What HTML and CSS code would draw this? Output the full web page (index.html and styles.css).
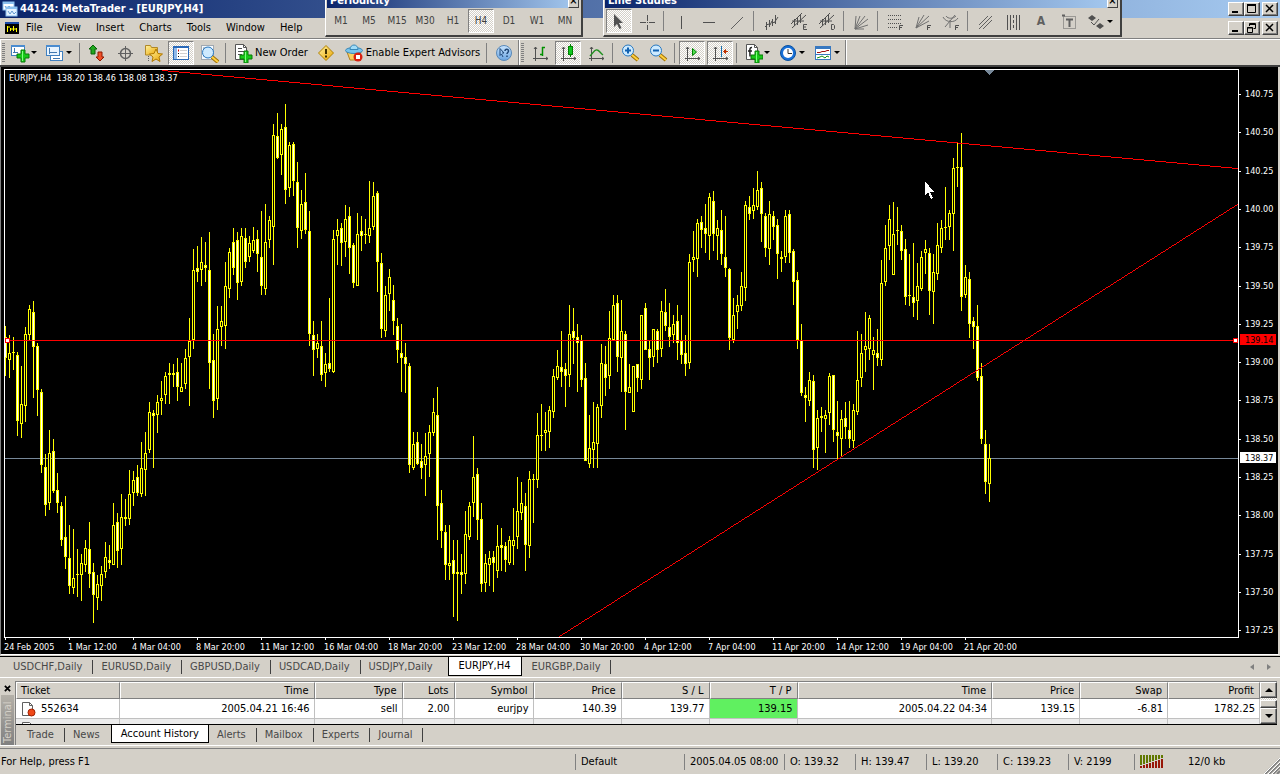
FILE: index.html
```html
<!DOCTYPE html>
<html lang="en">
<head>
<meta charset="utf-8">
<title>44124: MetaTrader - [EURJPY,H4]</title>
<link rel="stylesheet" href="styles.css">
</head>
<body>
<svg class="defs" width="0" height="0" aria-hidden="true">
  <defs>
    <linearGradient id="blue" x1="0" y1="0" x2="0" y2="1"><stop offset="0" stop-color="#c8e4ff"/><stop offset="1" stop-color="#6aa4e0"/></linearGradient>
    <linearGradient id="gold" x1="0" y1="0" x2="1" y2="1"><stop offset="0" stop-color="#fff2a0"/><stop offset="1" stop-color="#eaa400"/></linearGradient>
    <g id="plus"><path d="M11 8h4v4h4v4h-4v4h-4v-4H7v-4h4z" fill="#18c818" stroke="#087808"/><path d="M12.500 9v10" stroke="#80ff80"/></g>
    <g id="axes" fill="none" stroke="#505050"><path d="M5.500 4v14M3 15.500h15M4 6l1.500-2L7 6M16 14l2 1.500-2 1.500"/></g>
    <g id="lens"><path d="M12 12l6 5" stroke="#a07000" stroke-width="4"/><path d="M12 12l6 5" stroke="#ffd040" stroke-width="2"/><circle cx="8" cy="7.500" r="5.500" fill="#cdeaff" stroke="#2878c0"/></g>
    <g id="doc"><path d="M3.500 1.500h8l3 3v12h-11z" fill="#fff" stroke="#555"/><path d="M11.500 1.500v3h3" fill="none" stroke="#555"/></g>
  </defs>
</svg>

<header class="titlebar">
  <svg class="app-icon" viewBox="0 0 16 16"><rect x="1" y="1" width="11" height="8" fill="#fff" stroke="#8cc0f0"/><path d="M1 2h11" stroke="#8cc0f0" stroke-width="2"/><path d="M3 5l2 3 2-3 2 2" fill="none" stroke="#6098d0"/><rect x="4" y="6" width="11" height="9" fill="#e4f2ff" stroke="#8cc0f0"/><path d="M4 7h11" stroke="#8cc0f0" stroke-width="2"/><path d="M6 10l2 3 2-3 2 3 2-2" fill="none" stroke="#6098d0"/></svg>
  <h1 class="title">44124: MetaTrader - [EURJPY,H4]</h1>
  <div class="winbtns">
    <button class="winbtn" aria-label="Minimize"><svg viewBox="0 0 12 10"><path d="M2 8h6" stroke="#000" stroke-width="2"/></svg></button>
    <button class="winbtn" aria-label="Maximize"><svg viewBox="0 0 12 10"><path d="M1.500 1v7.500h8V1" fill="none" stroke="#000"/><path d="M1 1h9" stroke="#000" stroke-width="2"/></svg></button>
    <button class="winbtn last" aria-label="Close"><svg viewBox="0 0 12 10"><path d="M2 1l7 7M9 1L2 8" stroke="#000" stroke-width="1.500"/></svg></button>
  </div>
</header>

<nav class="menubar">
  <svg class="menu-icon" viewBox="0 0 14 12"><rect width="14" height="12" fill="#000"/><path d="M0 1h14" stroke="#1848a8" stroke-width="2"/><path d="M2.500 4v6M5.500 6v3M8.500 4v5M11.500 6v4M2 5h3M5 7h4M9 7h3" stroke="#ff0" fill="none"/></svg>
  <button class="menu">File</button><button class="menu">View</button><button class="menu">Insert</button><button class="menu">Charts</button><button class="menu">Tools</button><button class="menu">Window</button><button class="menu">Help</button>
  <div class="winbtns">
    <button class="winbtn" aria-label="Minimize chart"><svg viewBox="0 0 12 10"><path d="M2 8h6" stroke="#000" stroke-width="2"/></svg></button>
    <button class="winbtn" aria-label="Restore chart"><svg viewBox="0 0 12 10"><path d="M3.500 3V.5h6v5h-2M3 1.500h7M1.500 4.500h5v5h-5zM1 5h6" fill="none" stroke="#000"/></svg></button>
    <button class="winbtn last" aria-label="Close chart"><svg viewBox="0 0 12 10"><path d="M2 1l7 7M9 1L2 8" stroke="#000" stroke-width="1.500"/></svg></button>
  </div>
</nav>

<div class="toolbars">
  <div class="toolbar">
    <span class="grip"></span>
    <button class="tool drop" aria-label="New chart"><svg viewBox="0 0 20 20"><rect x="1.500" y="2.500" width="13" height="10" fill="#fff" stroke="#4080c0"/><path d="M1 3h14" stroke="#4a8cd0" stroke-width="2"/><path d="M4.500 5v5M3 9.500h5" stroke="#4078b0"/><use href="#plus" y="-1"/></svg></button>
    <button class="tool drop" aria-label="Profiles"><svg viewBox="0 0 20 20"><rect x="5.500" y="8.500" width="12" height="9" fill="#fff" stroke="#4080c0"/><path d="M8 15.500h7" stroke="#4078b0"/><rect x="1.500" y="2.500" width="13" height="10" fill="#e8f4ff" stroke="#4080c0"/><path d="M1 3h14" stroke="#4a8cd0" stroke-width="2"/><path d="M4.500 5v6M4 9.500h8" stroke="#4078b0"/></svg></button>
    <span class="sep"></span>
    <button class="tool" aria-label="Market watch"><svg viewBox="0 0 20 20"><path d="M6 2l4 4H8v5H4V6H2z" fill="#20a820" stroke="#086008"/><path d="M13 18l-4-4h2V9h4v5h2z" fill="#f05028" stroke="#901800"/></svg></button>
    <button class="tool" aria-label="Data window"><svg viewBox="0 0 20 20"><circle cx="10.500" cy="10.500" r="5" fill="none" stroke="#606060" stroke-width="1.500"/><path d="M10.500 3v15M3 10.500h15" stroke="#606060"/></svg></button>
    <button class="tool" aria-label="Navigator"><svg viewBox="0 0 20 20"><path d="M2.500 12V2.500h5l1 2h6V12z" fill="url(#gold)" stroke="#b08828"/><path d="M5.500 13v5" stroke="#606060" stroke-dasharray="1 1"/><path d="M13 6l2 4.500 4.500.500-3.500 3 1 4.500-4-2.500-4 2.500 1-4.500-3.500-3 4.500-.500z" fill="url(#gold)" stroke="#b07800"/></svg></button>
    <button class="tool on" aria-label="Terminal"><svg viewBox="0 0 20 20"><rect x="2.500" y="3.500" width="15" height="13" fill="#fff" stroke="#2868b8"/><path d="M2 4h16" stroke="#2868b8" stroke-width="2"/><rect x="3" y="5" width="3" height="11" fill="#90b8e8"/><path d="M9 7.500h7M9 10.500h7M9 13.500h7" stroke="#d0d0d0"/><path d="M7 7.500h1" stroke="#c00" stroke-width="2"/><path d="M7 10.500h1M7 13.500h1" stroke="#000"/></svg></button>
    <button class="tool" aria-label="Strategy tester"><svg viewBox="0 0 20 20"><rect x="2.500" y="2.500" width="12" height="14" fill="#f4faff" stroke="#a0a8b0"/><path d="M5 5v9M4 5h8M7 8h6" stroke="#8090a0"/><use href="#lens" x="1" y="2"/></svg></button>
    <span class="sep"></span>
    <button class="tool text"><svg viewBox="0 0 20 20"><use href="#doc" x="-1" y="0"/><path d="M5 5.500h4M5 8.500h6M5 11.500h4" stroke="#505050"/><use href="#plus"/></svg>New Order</button>
    <button class="tool" aria-label="MetaEditor"><svg viewBox="0 0 20 20"><path d="M10 2.500l7.500 7.500-7.500 7.500L2.500 10z" fill="url(#gold)" stroke="#b08000"/><path d="M10 6v5M10 12.500v2" stroke="#403000" stroke-width="2"/></svg></button>
    <button class="tool text"><svg viewBox="0 0 20 20"><path d="M3 9l3 8h8l3-8z" fill="#f8d060" stroke="#b08020"/><ellipse cx="10" cy="7.500" rx="8.500" ry="3" fill="#78c4ec" stroke="#3888b8"/><path d="M6 6.500c0-6 8-6 8 0z" fill="#a0dcf8" stroke="#3888b8"/><circle cx="14" cy="14" r="4.500" fill="#d82010"/><rect x="12" y="12" width="4" height="4" fill="#fff"/></svg>Enable Expert Advisors</button>
    <span class="sep"></span>
    <button class="tool" aria-label="Help"><svg viewBox="0 0 20 20"><circle cx="10" cy="10" r="7.500" fill="url(#blue)" stroke="#5888b8"/><path d="M6 5.500v7l1.500-1.500 1.500 3M6 5.500l4 4.500H8" fill="none" stroke="#204878"/><path d="M11 8c0-2.500 3.500-2.500 3.500 0 0 1.500-1.500 1.500-1.500 3M13 12.500v1.500" fill="none" stroke="#204878" stroke-width="1.500"/></svg></button>
  </div>
  <div class="toolbar">
    <span class="grip"></span>
    <button class="tool" aria-label="Bar chart"><svg viewBox="0 0 20 20"><use href="#axes"/><path d="M12.500 4v9M12 4.500h3M10 11.500h3" stroke="#009000" stroke-width="1.500"/></svg></button>
    <button class="tool on" aria-label="Candlesticks"><svg viewBox="0 0 20 20"><use href="#axes"/><path d="M12.500 1v13" stroke="#008000"/><rect x="10.500" y="3.500" width="4" height="8" fill="#10c820" stroke="#008000"/></svg></button>
    <button class="tool" aria-label="Line chart"><svg viewBox="0 0 20 20"><use href="#axes"/><path d="M4 13c3-3 5-7 7-6 2 0 3 3 6 5" fill="none" stroke="#209020" stroke-width="1.500"/></svg></button>
    <span class="sep"></span>
    <button class="tool" aria-label="Zoom in"><svg viewBox="0 0 20 20"><use href="#lens"/><path d="M8 4.500v6M5 7.500h6" stroke="#1060b0" stroke-width="2"/></svg></button>
    <button class="tool" aria-label="Zoom out"><svg viewBox="0 0 20 20"><use href="#lens"/><path d="M5 7.500h6" stroke="#1060b0" stroke-width="2"/></svg></button>
    <span class="sep"></span>
    <button class="tool on" aria-label="Auto scroll"><svg viewBox="0 0 20 20"><use href="#axes"/><path d="M10.500 5.500v7l4-3.500z" fill="#50e050" stroke="#008000"/></svg></button>
    <button class="tool on" aria-label="Chart shift"><svg viewBox="0 0 20 20"><use href="#axes"/><path d="M11.500 3v11" stroke="#1870b0"/><path d="M18 8.500h-3M15.500 6.500v4l-2-2z" stroke="#c03000" fill="#c03000"/></svg></button>
    <span class="sep"></span>
    <button class="tool drop" aria-label="Indicators"><svg viewBox="0 0 20 20"><use href="#doc"/><path d="M9 4.500c-3-.500-2 3-2 9M5 8h4" fill="none" stroke="#222" stroke-width="1.500"/><use href="#plus" x="1"/></svg></button>
    <button class="tool drop" aria-label="Periods"><svg viewBox="0 0 20 20"><circle cx="10" cy="10" r="7.500" fill="#1870d8" stroke="#0850a0"/><circle cx="10" cy="10" r="5" fill="#fff"/><path d="M10 6v4.500h4" fill="none" stroke="#333"/></svg></button>
    <button class="tool drop" aria-label="Templates"><svg viewBox="0 0 20 20"><rect x="2.500" y="3.500" width="15" height="13" fill="#fff" stroke="#3878c0"/><path d="M2 4.500h16" stroke="#3878c0" stroke-width="3"/><path d="M3 11.500h14" stroke="#3878c0"/><path d="M4 9.500h3l2-1h3l2-1h2" fill="none" stroke="#a01010"/><path d="M4 15l3-1 2-1 3 2 2-2 2 1" fill="none" stroke="#109010"/></svg></button>
  </div>
  <div class="toolbar rest"></div>
</div>

<section class="float periodicity" aria-label="Periodicity">
  <div class="float-title"><span>Periodicity</span><button class="float-close" aria-label="Close Periodicity">×</button></div>
  <div class="float-body">
    <button class="tool tf">M1</button><button class="tool tf">M5</button><button class="tool tf">M15</button><button class="tool tf">M30</button><button class="tool tf">H1</button><button class="tool tf on">H4</button><button class="tool tf">D1</button><button class="tool tf">W1</button><button class="tool tf">MN</button>
  </div>
</section>

<section class="float studies" aria-label="Line Studies">
  <div class="float-title"><span>Line Studies</span><button class="float-close" aria-label="Close Line Studies">×</button></div>
  <div class="float-body">
    <button class="tool on" aria-label="Cursor"><svg viewBox="0 0 20 20"><path d="M5 3v13l3-3 2.500 5 2-1-2.500-5h4z" fill="#505050"/></svg></button>
    <button class="tool" aria-label="Crosshair"><svg viewBox="0 0 20 20" stroke="#505050"><path d="M10.500 4v6M10.500 14v5M3 11.500h6M12 11.500h6M10 11.500h1"/></svg></button>
    <span class="sep"></span>
    <button class="tool" aria-label="Vertical line"><svg viewBox="0 0 20 20" stroke="#505050"><path d="M10.500 5v13"/></svg></button>
    <button class="tool" aria-label="Horizontal line"><svg viewBox="0 0 20 20" stroke="#505050"><path d="M4 11.500h12"/></svg></button>
    <button class="tool" aria-label="Trendline"><svg viewBox="0 0 20 20" stroke="#606060"><path d="M4 18L16 6"/></svg></button>
    <span class="sep"></span>
    <button class="tool" aria-label="Linear regression"><svg viewBox="0 0 20 20" stroke="#505050" fill="none"><path d="M5.500 11v8M8.500 9v7M11.500 8v7M14.500 4v9M4 16l3-3 2 1 2-4 2 2 4-6"/></svg></button>
    <button class="tool" aria-label="Equidistant channel"><svg viewBox="0 0 20 20" stroke="#505050" fill="none"><path d="M2 13L13 2M3 17L17 4M5.500 8v7M8.500 6v8M11.500 3v9M3 10h12"/><path d="M18 13.500h-3.500v5H18M14 16h3"/></svg></button>
    <button class="tool" aria-label="Standard deviation channel"><svg viewBox="0 0 20 20" stroke="#505050" fill="none"><path d="M2 13L13 2M3 17L17 4M5.500 8v7M8.500 6v8M11.500 3v9M3 10h12"/><path d="M14.500 13.500h2l1 1v3l-1 1h-2z"/></svg></button>
    <span class="sep"></span>
    <button class="tool" aria-label="Gann fan"><svg viewBox="0 0 20 20" stroke="#707070"><path d="M4 18L5 5M4 18L9 5M4 18L14 5M4 18L17 8M4 18l13-4M4 18h9"/></svg></button>
    <span class="sep"></span>
    <button class="tool" aria-label="Fibonacci retracement"><svg viewBox="0 0 20 20" stroke="#505050" fill="none"><path d="M3 4.500h14M3 8.500h14M3 12.500h14M3 16.500h9" stroke-dasharray="1 1"/><path d="M14.500 19v-4.500H18M14 16.500h3"/></svg></button>
    <button class="tool" aria-label="Fibonacci fan"><svg viewBox="0 0 20 20" stroke="#707070" fill="none"><path d="M3 17L6 6M3 17L11 4M3 17L16 5M3 17l13-7"/><path stroke="#505050" d="M14.500 19v-4.500H18M14 16.500h3"/></svg></button>
    <button class="tool" aria-label="Fibonacci arcs"><svg viewBox="0 0 20 20" stroke="#707070" fill="none"><path d="M4 16L14 4M2 6c3 6 12 6 15 1M5 5c2 3 7 3 10 0M9 9v8"/><path stroke="#505050" d="M14.500 19v-4.500H18M14 16.500h3"/></svg></button>
    <span class="sep"></span>
    <button class="tool" aria-label="Parallel lines"><svg viewBox="0 0 20 20" stroke="#606060"><path d="M4 14l9-9M4 18L17 5M8 18l9-9"/></svg></button>
    <button class="tool" aria-label="Cycle lines"><svg viewBox="0 0 20 20" stroke="#505050"><path d="M4.500 4v15M7.500 4v15M13.500 4v15M16.500 4v15"/><path d="M10.500 4v15" stroke-dasharray="3 2"/></svg></button>
    <button class="tool letter" aria-label="Text">A</button>
    <button class="tool" aria-label="Text label"><svg viewBox="0 0 20 20" stroke="#606060" fill="none"><rect x="4.500" y="5.500" width="12" height="12" stroke-dasharray="1 1"/><path d="M7 8.500h7M10.500 8v8" stroke-width="2"/><path d="M3 4.500h3" stroke-width="2"/></svg></button>
    <button class="tool drop" aria-label="Arrows"><svg viewBox="0 0 20 20" fill="#505050"><path d="M6 4l4 3-4 3-4-3zM14 12l4 3-4 3-4-3z"/><path d="M5 11l3 3 5-6" fill="none" stroke="#505050"/></svg></button>
  </div>
</section>

<main class="chart">
  <svg id="chart" viewBox="0 67 1277 587" preserveAspectRatio="xMinYMin meet" role="img" aria-label="EURJPY H4 candlestick chart"></svg>
</main>

<div class="charttabs">
  <button>USDCHF,Daily</button><button>EURUSD,Daily</button><button>GBPUSD,Daily</button><button>USDCAD,Daily</button><button class="before">USDJPY,Daily</button><button class="active">EURJPY,H4</button><button>EURGBP,Daily</button>
  <span class="tab-arrows"><button aria-label="Scroll tabs left"><svg viewBox="0 0 6 8"><path d="M5 1v6L1 4z"/></svg></button><button aria-label="Scroll tabs right"><svg viewBox="0 0 6 8"><path d="M1 1v6l4-3z"/></svg></button></span>
</div>

<section class="terminal">
  <div class="side"><button class="side-close" aria-label="Close terminal"><svg viewBox="0 0 8 8"><path d="M1 1l6 6M7 1L1 7" stroke="#000" stroke-width="2"/></svg></button><span class="side-label">Terminal</span></div>
  <div class="panel">
    <div class="tablewrap">
      <table class="history">
        <colgroup><col class="c104"><col><col class="c88"><col class="c52"><col class="c79"><col class="c88"><col class="c88"><col class="c88"><col><col class="c88"><col class="c88"><col class="c92"></colgroup>
        <thead><tr><th class="left">Ticket</th><th>Time</th><th>Type</th><th>Lots</th><th>Symbol</th><th>Price</th><th>S / L</th><th>T / P</th><th>Time</th><th>Price</th><th>Swap</th><th>Profit</th></tr></thead>
        <tbody>
          <tr><td class="left"><span class="ticket"><svg viewBox="0 0 16 16"><path d="M2.500 1.500h7l3 3v10h-10z" fill="#fff" stroke="#606060"/><path d="M9.500 1.500v3h3" fill="none" stroke="#606060"/><circle cx="11.500" cy="11.500" r="3.500" fill="#f04818" stroke="#a02000"/></svg>552634</span></td><td>2005.04.21 16:46</td><td>sell</td><td>2.00</td><td>eurjpy</td><td>140.39</td><td>139.77</td><td class="hit">139.15</td><td>2005.04.22 04:34</td><td>139.15</td><td>-6.81</td><td>1782.25</td></tr>
          <tr class="alt"><td class="left"><span class="ticket"><svg viewBox="0 0 16 16"><path d="M2.500 1.500h7l3 3v10h-10z" fill="#fff" stroke="#606060"/></svg></span></td><td></td><td>sell</td><td></td><td>eurusd</td><td></td><td></td><td></td><td></td><td></td><td></td><td></td></tr>
        </tbody>
      </table>
      <div class="scroll"><button aria-label="Scroll up"><svg viewBox="0 0 8 4"><path d="M0 4l4-4 4 4z"/></svg></button><span class="thumb"></span><button aria-label="Scroll down"><svg viewBox="0 0 8 4"><path d="M0 0l4 4 4-4z"/></svg></button></div>
    </div>
    <div class="termtabs"><button>Trade</button><button class="before">News</button><button class="active">Account History</button><button>Alerts</button><button>Mailbox</button><button>Experts</button><button>Journal</button></div>
  </div>
</section>

<footer class="status">
  <span class="help">For Help, press F1</span>
  <span class="p109">Default</span><span class="p100">2005.04.05 08:00</span><span class="p71">O: 139.32</span><span class="p71">H: 139.47</span><span class="p71">L: 139.20</span><span class="p71">C: 139.23</span><span class="p66">V: 2199</span>
  <span class="net"><svg class="bars" viewBox="0 0 24 13"><g id="bars"></g></svg>12/0 kb</span>
  <svg class="resize" viewBox="0 0 16 16"><path d="M1 16L16 1M5 16L16 5M9 16l7-7M13 16l3-3" stroke="#808080" stroke-width="2"/><path d="M0 16L16 0M4 16L16 4M8 16l8-8" stroke="#fff"/></svg>
</footer>
<script src="chart.js"></script>
</body>
</html>
```

FILE: styles.css
```css
* { box-sizing: border-box; }
body {
  margin: 0;
  height: 100vh;
  display: flex;
  flex-direction: column;
  overflow: hidden;
  position: relative;
  background: #d4d0c8;
  color: #000;
  font: 11px/14px "DejaVu Sans Condensed", "DejaVu Sans", sans-serif;
}
button { font: inherit; color: inherit; background: none; border: 0; padding: 0; margin: 0; white-space: nowrap; }
svg { display: block; flex: none; }
.defs { position: absolute; }

.titlebar { display: flex; align-items: center; height: 18px; flex: none; padding-left: 2px; background: linear-gradient(90deg, #0a246a, #a6caf0); }
.app-icon { width: 16px; height: 16px; }
.title { margin: 0 0 0 2px; font-size: 11px; line-height: 14px; font-weight: bold; color: #fff; }
.winbtns { display: flex; margin-left: auto; padding-right: 2px; }
.winbtn { width: 16px; height: 14px; display: grid; place-items: center; background: #d4d0c8; border: 1px solid; border-color: #fff #404040 #404040 #fff; box-shadow: inset -1px -1px #808080; }
.winbtn svg { width: 12px; height: 10px; }
.winbtn.last { margin-left: 2px; }

.menubar { display: flex; align-items: center; height: 21px; flex: none; padding-left: 5px; border-bottom: 1px solid #808080; }
.menu-icon { width: 14px; height: 12px; }
.menu { padding: 0 8px 0 7px; }

.toolbars { display: flex; height: 28px; flex: none; border-top: 1px solid #fff; border-bottom: 2px solid #404040; }
.toolbar { display: flex; align-items: center; border-right: 1px solid #808080; border-left: 1px solid #fff; }
.toolbar.rest { flex: 1; border-right: 0; }
.grip { width: 3px; height: 20px; margin: 0 2px 0 1px; background: repeating-linear-gradient(#808080 0 1px, #d4d0c8 1px 2px); }
.sep { flex: none; width: 2px; height: 20px; margin: 0 2px; background: #808080; border-right: 1px solid #d4d0c8; }
.tool { flex: none; width: 26px; height: 24px; margin: 0 1px; display: flex; align-items: center; justify-content: center; }
.tool svg { width: 20px; height: 20px; }
.tool.on svg { margin: 0 -1px; }
.tool.drop { width: 33px; padding-right: 2px; }
.tool.drop::after { content: ""; border: 3px solid transparent; border-top-color: #000; border-bottom: 0; margin-left: 1px; }
.tool.text { width: auto; padding: 0 3px; gap: 2px; }
.tool.on { border: 1px solid; border-color: #808080 #fff #fff #808080; background: repeating-conic-gradient(#fff 0 25%, #d4d0c8 0 50%) 0 0 / 2px 2px; }

.float { position: absolute; top: 0; background: #d4d0c8; border: solid; border-color: #fff #404040 #404040 #fff; border-width: 0 2px 2px 1px; padding: 0 2px 1px 1px; }
.periodicity { left: 325px; }
.studies { left: 603px; }
.float-title { height: 8px; display: flex; align-items: flex-end; justify-content: space-between; overflow: hidden; padding-left: 3px; background: linear-gradient(90deg, #0a246a, #a6caf0); color: #fff; font-weight: bold; }
.float-close { width: 11px; height: 14px; line-height: 10px; color: #000; background: #d4d0c8; border: 1px solid; border-color: #fff #404040 #404040 #fff; }
.float-body { display: flex; align-items: center; height: 26px; }
.tf { font-size: 10px; color: #404040; }
.letter { font-weight: bold; font-size: 12px; color: #606060; }

.chart { flex: 1; min-height: 0; background: #000; border-left: 1px solid #808080; border-right: 2px solid #d4d0c8; border-bottom: 1px solid #fff; }
.chart svg { width: 100%; height: 100%; }
.chart text { font: 9px "DejaVu Sans Condensed", "DejaVu Sans", sans-serif; fill: #fff; white-space: pre; }
.chart .dark { fill: #000; }

.charttabs, .termtabs { display: flex; align-items: center; color: #484848; }
.charttabs { height: 22px; flex: none; border-top: 1px solid #000; border-bottom: 1px solid #fff; padding: 0 8px 0 5px; margin-top: 1px; }
.charttabs > button, .termtabs > button { padding: 0 10px 0 8px; height: 14px; border-right: 1px solid #404040; }
.charttabs > .before, .termtabs > .before { border-right-color: transparent; }
.charttabs > .active, .termtabs > .active { height: 19px; color: #000; background: #fff; border: 1px solid #000; border-top: 0; align-self: flex-start; padding: 1px 9px 0; }
.charttabs > .active { margin: 0 2px 0 4px; padding: 0 10px; }
.tab-arrows { display: flex; gap: 11px; margin-left: auto; }
.tab-arrows svg { width: 6px; height: 8px; fill: #808080; }

.terminal { display: flex; flex: none; height: 68px; padding: 3px 3px 0 1px; border-bottom: 1px solid #fff; }
.side { display: flex; flex-direction: column; align-items: center; width: 13px; margin-right: 1px; }
.side-close { width: 8px; height: 14px; }
.side-close svg { width: 7px; height: 7px; }
.side-label { flex: 1; width: 13px; writing-mode: vertical-rl; transform: rotate(180deg); line-height: 13px; background: linear-gradient(#808080, #b4b0a8); color: #d4d0c8; text-align: left; padding-top: 2px; }
.panel { flex: 1; min-width: 0; display: flex; flex-direction: column; border-left: 1px solid #808080; border-top: 1px solid #808080; }
.tablewrap { display: flex; height: 44px; overflow: hidden; border-bottom: 1px solid #000; background: #fff; }
.history { flex: 1; width: 0; table-layout: fixed; border-collapse: separate; border-spacing: 0; height: 57px; }
.c104 { width: 104px; } .c88 { width: 88px; } .c52 { width: 52px; } .c79 { width: 79px; } .c92 { width: 92px; }
.history th { height: 17px; padding: 1px 5px 0 4px; font-weight: normal; text-align: right; background: #d4d0c8; border: 1px solid; border-color: #fff #808080 #808080 #fff; line-height: 14px; }
.history td { height: 20px; padding: 1px 4px 0; text-align: right; border-right: 1px solid #c0c0c0; border-bottom: 1px solid #c0c0c0; line-height: 16px; }
.history .left { text-align: left; }
.history .alt td { background: #ececec; }
.history .hit { background: #60f060; }
.ticket { display: flex; align-items: center; gap: 5px; }
.ticket svg { width: 16px; height: 16px; }
.scroll { width: 17px; display: flex; flex-direction: column; justify-content: space-between; background: repeating-conic-gradient(#fff 0 25%, #d4d0c8 0 50%) 0 0 / 2px 2px; }
.scroll button, .thumb { display: grid; place-items: center; height: 16px; background: #d4d0c8; border: 1px solid; border-color: #fff #404040 #404040 #fff; box-shadow: inset -1px -1px #808080; }
.scroll svg { width: 8px; height: 4px; }
.thumb { height: 8px; margin-top: 2px; }
.termtabs { height: 20px; padding-left: 3px; }
.termtabs > .active { height: 18px; }

.status { display: flex; align-items: center; height: 26px; flex: none; margin-top: 2px; border-top: 1px solid #808080; padding-left: 1px; }
.status span { display: flex; align-items: center; height: 16px; border-left: 1px solid #808080; padding-left: 5px; white-space: nowrap; }
.status .help { flex: 1; border: 0; padding: 0; }
.p109 { width: 109px; } .p100 { width: 100px; } .p71 { width: 71px; } .p66 { width: 66px; }
.net { width: 130px; gap: 24px; }
.bars { width: 24px; height: 13px; }
.resize { width: 16px; height: 16px; align-self: flex-end; }
```

FILE: chart.js
```js
// One candle per entry: high, body top, body bottom, low, kind (1 = falling, 0 = rising).
const candles = `326 337 358 376 1;335 353 360 378 0;337 352 353 370 1;352 355 421 436 1;366 404 424 438 0;327 334 406 422 0;305 309 335 340 0;301 312 347 398 1;343 346 390 416 1;389 392 465 473 1;454 467 505 516 1;430 453 503 510 0;439 451 491 493 1;473 490 503 513 1;502 506 540 546 1;496 537 557 569 1;525 558 586 594 1;529 578 588 594 0;549 574 575 597 1;554 563 575 601 0;540 548 565 572 0;522 549 574 588 1;563 572 595 623 1;575 584 598 610 0;566 574 586 601 0;542 557 572 578 0;545 560 563 569 1;503 525 565 565 0;513 522 551 568 1;494 517 549 565 0;499 517 519 526 1;470 494 519 525 0;471 480 493 506 0;465 477 493 496 1;442 468 494 497 0;432 453 470 496 0;402 412 450 453 0;410 413 416 468 1;395 402 415 433 0;381 398 401 415 0;372 376 395 404 0;363 373 375 404 1;364 373 375 387 1;358 372 387 401 1;363 387 392 392 0;349 358 384 389 0;318 341 357 406 0;249 270 340 349 0;246 268 272 282 1;237 262 270 286 0;242 265 268 282 1;232 270 363 389 1;334 360 401 418 1;306 329 399 410 0;306 321 327 346 0;262 286 326 349 0;248 252 289 298 0;228 242 268 275 1;232 240 283 300 1;228 236 282 286 0;228 238 262 268 1;236 243 257 262 0;227 240 251 253 0;230 239 254 272 1;211 257 286 295 1;204 242 289 295 0;216 220 240 248 0;124 135 227 265 0;113 136 158 159 1;124 129 155 175 0;104 127 190 204 1;142 145 188 197 0;142 144 181 196 1;162 182 228 248 1;190 204 231 239 0;173 202 230 234 1;211 231 334 346 1;321 335 350 376 1;334 343 349 358 0;321 346 375 381 1;353 364 373 387 0;298 363 369 372 1;230 239 372 373 0;219 230 236 265 0;223 228 243 266 1;205 219 242 257 0;207 216 248 274 1;243 245 283 288 1;213 234 286 286 0;216 231 236 251 1;219 234 235 244 1;181 228 236 243 0;182 196 227 230 0;191 193 262 292 1;253 263 329 338 1;286 295 331 337 0;269 277 294 311 0;285 300 321 335 1;318 326 350 363 1;324 353 358 392 1;343 357 364 393 1;363 366 465 473 1;432 444 468 470 0;432 442 464 465 1;444 461 468 479 1;433 456 465 496 0;425 432 454 477 0;398 412 433 436 0;387 415 506 540 1;490 503 531 548 1;525 532 565 580 1;525 563 566 580 0;540 560 574 617 1;540 572 574 621 1;554 572 575 594 1;511 534 574 584 0;502 506 537 540 0;436 477 503 517 0;468 474 520 540 1;503 519 584 592 1;554 563 583 592 0;551 558 565 586 0;551 557 563 592 1;525 546 571 578 0;528 545 548 571 1;542 546 560 572 1;536 540 563 565 0;508 540 546 565 0;477 511 537 549 0;482 503 513 520 0;493 506 545 571 1;471 479 546 558 0;474 479 480 523 1;413 435 480 488 0;404 435 436 451 1;412 430 433 451 0;406 410 432 448 0;369 376 412 418 0;350 366 378 380 0;331 367 372 387 1;363 369 376 407 1;305 334 375 387 0;308 331 338 364 1;324 337 343 392 1;335 340 380 387 1;363 378 461 461 1;415 448 464 468 0;402 442 450 468 0;404 407 444 468 0;344 363 406 418 0;346 364 378 396 1;311 338 376 389 0;295 305 340 340 0;295 303 357 372 1;300 331 358 392 0;331 334 392 430 1;364 387 393 393 0;366 366 412 412 0;364 364 378 392 1;315 315 380 389 0;303 308 350 350 1;341 349 358 380 1;329 329 357 367 0;329 331 350 363 1;301 311 349 357 0;289 312 326 331 1;303 327 337 347 1;315 324 335 343 0;305 321 343 360 1;315 341 355 364 1;335 353 364 376 1;254 262 363 369 0;231 257 260 272 0;219 223 259 277 0;216 222 230 248 1;204 228 234 253 1;193 197 236 260 0;191 201 234 251 1;220 228 236 260 0;210 230 254 265 1;216 257 268 277 1;268 269 338 350 1;298 315 340 343 0;295 305 312 329 0;272 286 306 311 0;201 205 288 301 0;196 207 214 220 1;188 205 211 219 0;171 190 207 210 0;182 188 214 242 1;213 216 248 257 1;201 214 249 265 0;211 216 227 240 1;219 225 254 279 1;251 257 259 272 1;210 216 257 263 0;210 214 253 263 1;249 251 282 305 1;272 280 340 349 1;324 340 393 396 1;387 395 398 422 1;372 380 401 406 0;375 381 450 468 1;410 418 448 470 0;407 416 418 432 1;410 415 419 453 0;373 376 413 425 0;375 375 430 442 1;401 432 436 459 1;410 419 439 456 0;402 418 427 439 1;401 430 439 448 1;404 410 441 448 0;331 380 412 415 0;334 353 378 387 0;312 346 350 372 0;315 318 349 360 0;337 350 355 390 0;329 353 358 366 1;260 283 360 366 0;225 248 282 286 0;205 219 246 260 0;202 234 275 275 0;207 230 231 245 1;225 231 251 260 1;239 249 297 305 1;254 295 296 306 1;243 297 303 317 1;263 286 301 320 0;251 257 289 291 0;240 249 253 274 0;248 253 291 315 1;254 272 292 324 0;223 245 274 280 0;220 228 248 253 0;187 227 228 240 1;210 213 227 240 0;158 168 214 251 0;142 167 168 187 1;133 167 297 311 1;265 277 295 298 0;272 279 324 338 1;317 321 327 349 1;305 326 378 381 1;363 376 439 444 1;430 444 482 494 1;444 458 484 502 0`;
const dates = ["24 Feb 2005", "1 Mar 12:00", "4 Mar 04:00", "8 Mar 20:00", "11 Mar 12:00", "16 Mar 04:00", "18 Mar 20:00", "23 Mar 12:00", "28 Mar 04:00", "30 Mar 20:00", "4 Apr 12:00", "7 Apr 04:00", "11 Apr 20:00", "14 Apr 12:00", "19 Apr 04:00", "21 Apr 20:00"];

const rect = (x, y, w, h, fill) => `<rect x="${x}" y="${y}" width="${w}" height="${h}" fill="${fill}"/>`;
const text = (x, y, s, cls = "") => `<text x="${x}" y="${y}" class="${cls}">${s}</text>`;

let out = rect(4, 458, 1234, 1, "#778899");
candles.split(";").forEach((row, i) => {
  const [high, top, bottom, low, falling] = row.split(" ").map(Number);
  const x = 4 + i * 4;
  out += rect(x, high, 1, low - high, "#ff0") + rect(x - 1, top, 3, bottom - top, "#ff0");
  if (bottom - top > 2) out += rect(x, top + 1, 1, bottom - top - 2, falling ? "#fff" : "#000");
});

// Trend lines are plotted as stepped runs of whole pixels.
function trend(x1, y1, x2, y2) {
  let d = "", start = x1, y = y1;
  for (let x = x1 + 1; x <= x2 + 1; x++) {
    const next = x > x2 ? NaN : Math.round(y1 + (y2 - y1) * (x - x1) / (x2 - x1));
    if (next !== y) { d += rect(start, y, x - start, 1, "#f00"); start = x; y = next; }
  }
  return d;
}
out += trend(161, 70, 1236, 168) + trend(558, 636, 1236, 204);
out += rect(3, 69, 1, 569, "#fff") + rect(3, 69, 1235, 1, "#fff") + rect(1237, 69, 1, 569, "#fff") + rect(3, 637, 1235, 1, "#fff");
out += rect(4, 340, 1233, 1, "#f00") + rect(4, 338, 5, 5, "#f00") + rect(5, 339, 3, 3, "#fff") + rect(1232, 338, 5, 5, "#f00") + rect(1233, 339, 3, 3, "#fff");
out += `<path d="M984 70h9l-4.500 5z" fill="#778899"/>`;
for (let i = 0; i < 15; i++) {
  const y = Math.round(94 + i * 38.3);
  out += rect(1238, y, 2, 1, "#fff") + text(1244, y + 3, (140.75 - i * 0.25).toFixed(2));
}
dates.forEach((d, i) => { out += rect(4 + i * 64, 638, 1, 2, "#fff") + text(3 + i * 64, 650, d); });
out += rect(1239, 334, 36, 11, "#f00") + text(1244, 343, "139.14", "dark");
out += rect(1239, 452, 36, 11, "#fff") + text(1244, 461, "138.37", "dark");
out += text(8, 81, "EURJPY,H4  138.20 138.46 138.08 138.37");
out += `<path d="M924 181v14l3-3 3 7 2-1-3-6h4z" fill="#fff"/>`;
const chart = document.getElementById("chart");
chart.setAttribute("shape-rendering", "crispEdges");
chart.innerHTML = out;

let bars = "";
for (let i = 0; i < 8; i++) bars += rect(i * 3, 0, 2, 10 - i, "#607800") + rect(i * 3, 11 - i, 2, 2 + i, "#981808");
document.getElementById("bars").innerHTML = bars;
```
